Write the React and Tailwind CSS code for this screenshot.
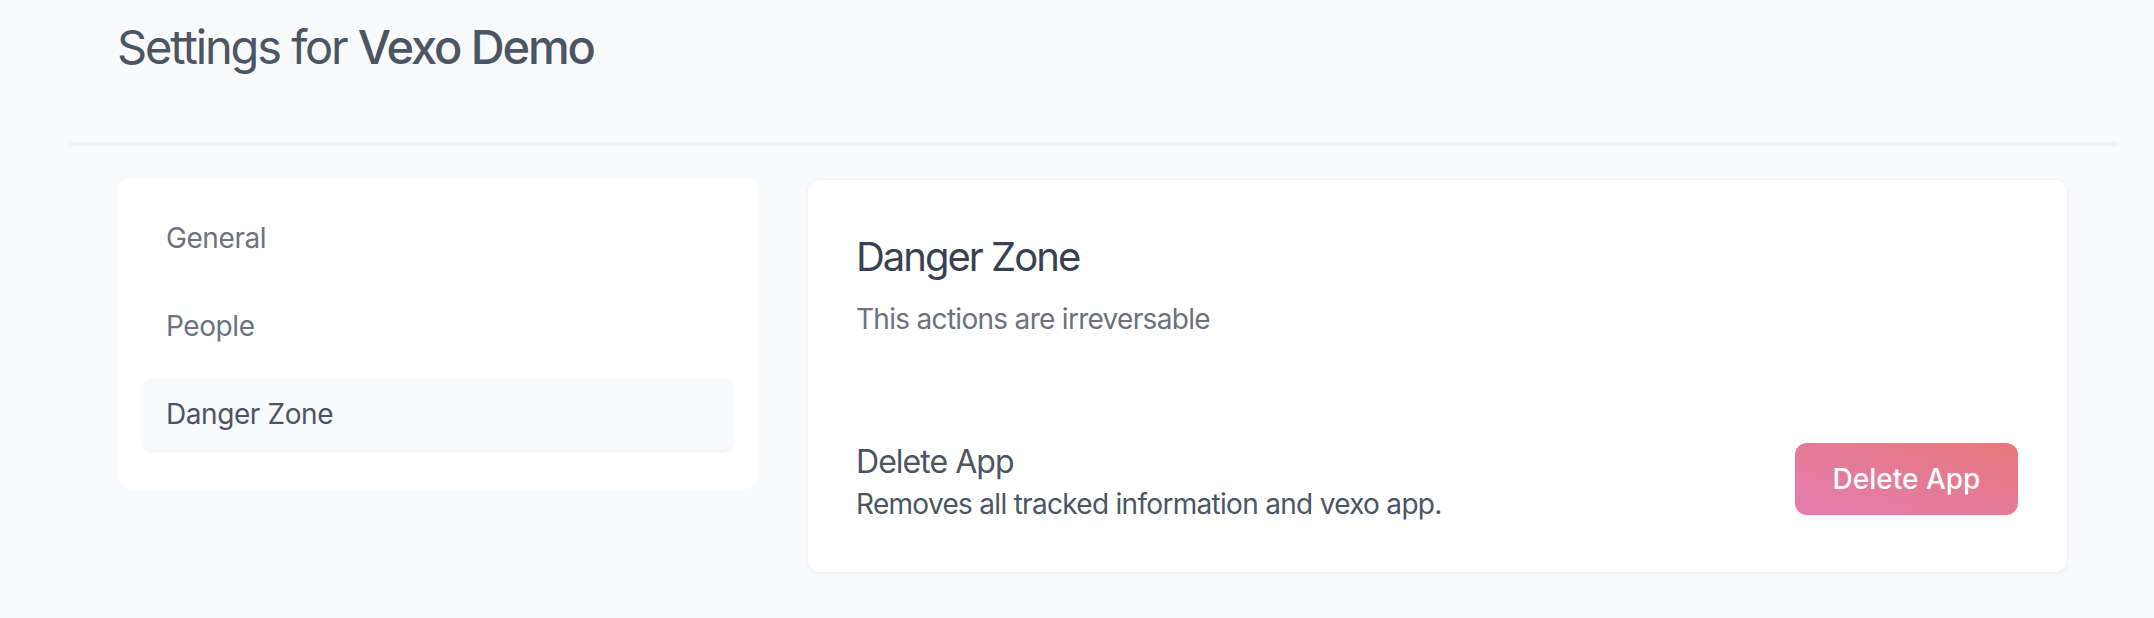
import React from "react";

const navItems = [
  { label: "General", active: false },
  { label: "People", active: false },
  { label: "Danger Zone", active: true },
];

const App = () => {
  return (
    <div className="min-h-screen w-full bg-[#f9fafb] font-['Inter',sans-serif]">
      <div className="ml-[70px] w-[2048px]">
        {/* Header */}
        <div className="px-[47px] pt-[15px] pb-[63px] border-b-[4px] border-[#f2f3f5]">
          <h1 className="text-[47px] leading-[64px] tracking-[-0.045em] text-[#4b5563]">
            Settings for <span className="font-medium">Vexo Demo</span>
          </h1>
        </div>

        <div className="flex items-start gap-[51px] pl-[48px] pt-[32px]">
          {/* Sidebar */}
          <nav className="w-[639px] shrink-0 bg-white rounded-[12px] pt-[24px] px-[23px] pb-[39px] flex flex-col gap-[16px]">
            {navItems.map((item) => (
              <a
                key={item.label}
                href="#"
                className={
                  item.active
                    ? "h-[72px] flex items-center px-[25px] rounded-[12px] bg-[#f9fafb] shadow-[0_2px_3px_rgba(0,0,0,0.05)] text-[28px] tracking-[-0.015em] text-[#4b5563]"
                    : "h-[72px] flex items-center px-[25px] rounded-[12px] text-[28px] tracking-[-0.015em] text-[#6b7280]"
                }
              >
                {item.label}
              </a>
            ))}
          </nav>

          {/* Danger zone card */}
          <div className="w-[1259px] mt-[2px] bg-white rounded-[12px] shadow-[0_1px_4px_rgba(0,0,0,0.07)] px-[48px] pt-[49px] pb-[48px]">
            <h2 className="text-[40px] leading-[56px] tracking-[-0.05em] text-[#374151]">
              Danger Zone
            </h2>
            <p className="mt-[14px] text-[28px] leading-[40px] tracking-[-0.025em] text-[#6b7280]">
              This actions are irreversable
            </p>

            <div className="mt-[98px] flex items-start justify-between">
              <div className="mt-[3px]">
                <h3 className="text-[32px] leading-[44px] tracking-[-0.03em] text-[#4b5563]">
                  Delete App
                </h3>
                <p className="text-[28px] leading-[40px] tracking-[-0.025em] text-[#4b5563]">
                  Removes all tracked information and vexo app.
                </p>
              </div>
              <button className="mt-[6px] h-[72px] w-[223px] mr-[1px] rounded-[12px] bg-gradient-to-tr from-[#e47cb0] to-[#e6787a] shadow-[0_2px_4px_rgba(0,0,0,0.06)] text-[28px] font-medium text-white">
                Delete App
              </button>
            </div>
          </div>
        </div>
      </div>
    </div>
  );
};

export default App;
